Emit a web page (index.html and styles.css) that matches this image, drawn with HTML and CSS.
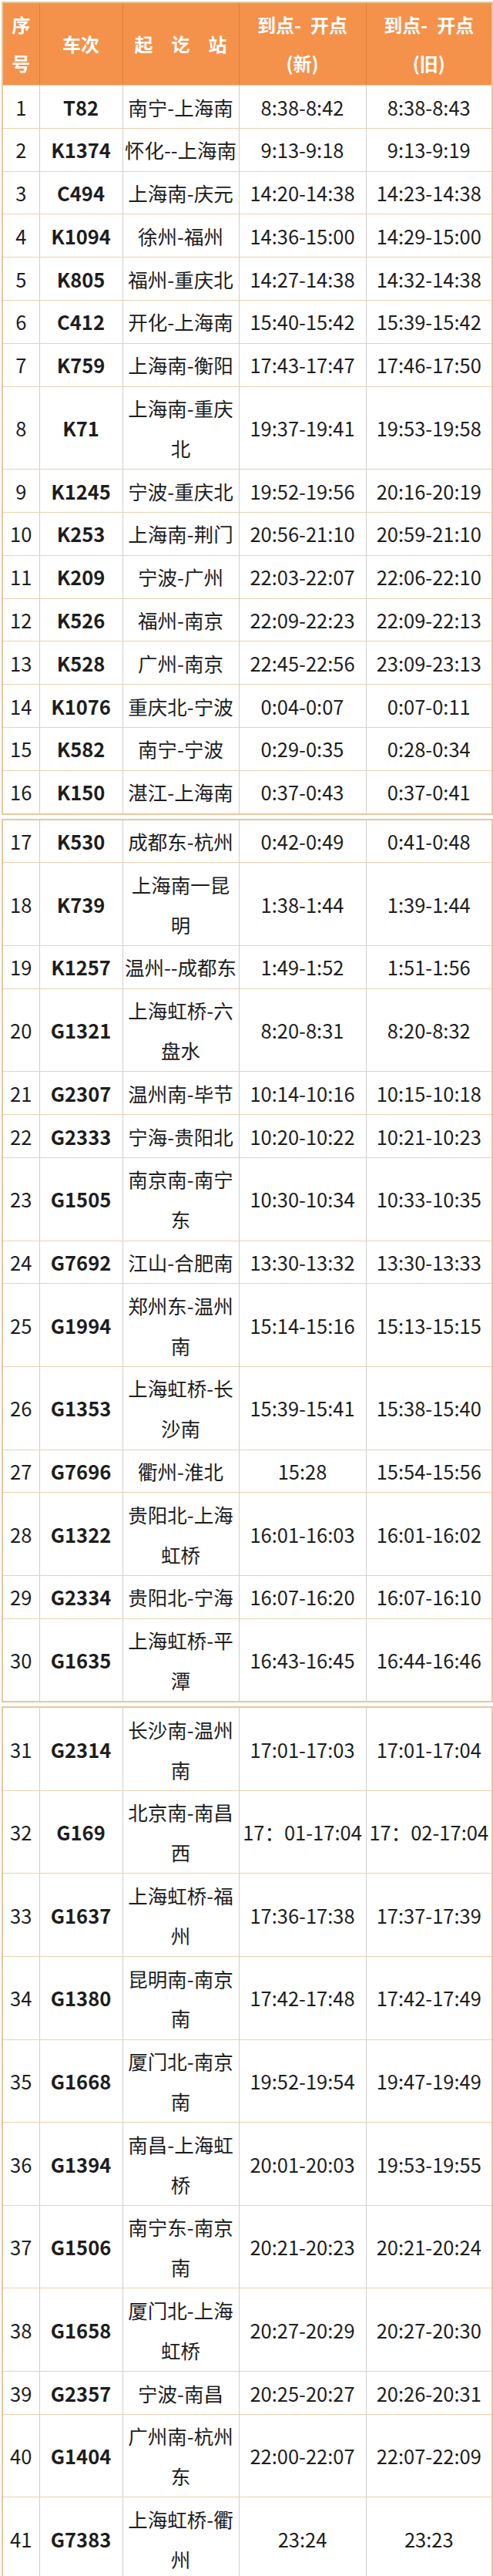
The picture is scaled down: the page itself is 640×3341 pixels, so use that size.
FILE: index.html
```html
<!DOCTYPE html>
<html lang="zh-CN">
<head>
<meta charset="utf-8">
<title>列车时刻调整表</title>
<link rel="stylesheet" href="styles.css">
</head>
<body>
<div class="page">
<table class="tt">
<colgroup><col class="c1"><col class="c2"><col class="c3"><col class="c4"><col class="c5"></colgroup>
<thead>
<tr><th>序<br>号</th><th>车次</th><th>起&emsp;讫&emsp;站</th><th>到点-&ensp;开点<br>(新)</th><th>到点-&ensp;开点<br>(旧)</th></tr>
</thead>
<tbody>
<tr><td>1</td><td class="no">T82</td><td class="st">南宁-上海南</td><td>8:38-8:42</td><td>8:38-8:43</td></tr>
<tr><td>2</td><td class="no">K1374</td><td class="st">怀化--上海南</td><td>9:13-9:18</td><td>9:13-9:19</td></tr>
<tr><td>3</td><td class="no">C494</td><td class="st">上海南-庆元</td><td>14:20-14:38</td><td>14:23-14:38</td></tr>
<tr><td>4</td><td class="no">K1094</td><td class="st">徐州-福州</td><td>14:36-15:00</td><td>14:29-15:00</td></tr>
<tr><td>5</td><td class="no">K805</td><td class="st">福州-重庆北</td><td>14:27-14:38</td><td>14:32-14:38</td></tr>
<tr><td>6</td><td class="no">C412</td><td class="st">开化-上海南</td><td>15:40-15:42</td><td>15:39-15:42</td></tr>
<tr><td>7</td><td class="no">K759</td><td class="st">上海南-衡阳</td><td>17:43-17:47</td><td>17:46-17:50</td></tr>
<tr><td>8</td><td class="no">K71</td><td class="st">上海南-重庆北</td><td>19:37-19:41</td><td>19:53-19:58</td></tr>
<tr><td>9</td><td class="no">K1245</td><td class="st">宁波-重庆北</td><td>19:52-19:56</td><td>20:16-20:19</td></tr>
<tr><td>10</td><td class="no">K253</td><td class="st">上海南-荆门</td><td>20:56-21:10</td><td>20:59-21:10</td></tr>
<tr><td>11</td><td class="no">K209</td><td class="st">宁波-广州</td><td>22:03-22:07</td><td>22:06-22:10</td></tr>
<tr><td>12</td><td class="no">K526</td><td class="st">福州-南京</td><td>22:09-22:23</td><td>22:09-22:13</td></tr>
<tr><td>13</td><td class="no">K528</td><td class="st">广州-南京</td><td>22:45-22:56</td><td>23:09-23:13</td></tr>
<tr><td>14</td><td class="no">K1076</td><td class="st">重庆北-宁波</td><td>0:04-0:07</td><td>0:07-0:11</td></tr>
<tr><td>15</td><td class="no">K582</td><td class="st">南宁-宁波</td><td>0:29-0:35</td><td>0:28-0:34</td></tr>
<tr><td>16</td><td class="no">K150</td><td class="st">湛江-上海南</td><td>0:37-0:43</td><td>0:37-0:41</td></tr>
</tbody>
</table>

<table class="tt">
<colgroup><col class="c1"><col class="c2"><col class="c3"><col class="c4"><col class="c5"></colgroup>
<tbody>
<tr><td>17</td><td class="no">K530</td><td class="st">成都东-杭州</td><td>0:42-0:49</td><td>0:41-0:48</td></tr>
<tr><td>18</td><td class="no">K739</td><td class="st">上海南一昆明</td><td>1:38-1:44</td><td>1:39-1:44</td></tr>
<tr><td>19</td><td class="no">K1257</td><td class="st">温州--成都东</td><td>1:49-1:52</td><td>1:51-1:56</td></tr>
<tr><td>20</td><td class="no">G1321</td><td class="st">上海虹桥-六盘水</td><td>8:20-8:31</td><td>8:20-8:32</td></tr>
<tr><td>21</td><td class="no">G2307</td><td class="st">温州南-毕节</td><td>10:14-10:16</td><td>10:15-10:18</td></tr>
<tr><td>22</td><td class="no">G2333</td><td class="st">宁海-贵阳北</td><td>10:20-10:22</td><td>10:21-10:23</td></tr>
<tr><td>23</td><td class="no">G1505</td><td class="st">南京南-南宁东</td><td>10:30-10:34</td><td>10:33-10:35</td></tr>
<tr><td>24</td><td class="no">G7692</td><td class="st">江山-合肥南</td><td>13:30-13:32</td><td>13:30-13:33</td></tr>
<tr><td>25</td><td class="no">G1994</td><td class="st">郑州东-温州南</td><td>15:14-15:16</td><td>15:13-15:15</td></tr>
<tr><td>26</td><td class="no">G1353</td><td class="st">上海虹桥-长沙南</td><td>15:39-15:41</td><td>15:38-15:40</td></tr>
<tr><td>27</td><td class="no">G7696</td><td class="st">衢州-淮北</td><td>15:28</td><td>15:54-15:56</td></tr>
<tr><td>28</td><td class="no">G1322</td><td class="st">贵阳北-上海虹桥</td><td>16:01-16:03</td><td>16:01-16:02</td></tr>
<tr><td>29</td><td class="no">G2334</td><td class="st">贵阳北-宁海</td><td>16:07-16:20</td><td>16:07-16:10</td></tr>
<tr><td>30</td><td class="no">G1635</td><td class="st">上海虹桥-平潭</td><td>16:43-16:45</td><td>16:44-16:46</td></tr>
</tbody>
</table>

<table class="tt">
<colgroup><col class="c1"><col class="c2"><col class="c3"><col class="c4"><col class="c5"></colgroup>
<tbody>
<tr><td>31</td><td class="no">G2314</td><td class="st">长沙南-温州南</td><td>17:01-17:03</td><td>17:01-17:04</td></tr>
<tr><td>32</td><td class="no">G169</td><td class="st">北京南-南昌西</td><td>17：01-17:04</td><td>17：02-17:04</td></tr>
<tr><td>33</td><td class="no">G1637</td><td class="st">上海虹桥-福州</td><td>17:36-17:38</td><td>17:37-17:39</td></tr>
<tr><td>34</td><td class="no">G1380</td><td class="st">昆明南-南京南</td><td>17:42-17:48</td><td>17:42-17:49</td></tr>
<tr><td>35</td><td class="no">G1668</td><td class="st">厦门北-南京南</td><td>19:52-19:54</td><td>19:47-19:49</td></tr>
<tr><td>36</td><td class="no">G1394</td><td class="st">南昌-上海虹桥</td><td>20:01-20:03</td><td>19:53-19:55</td></tr>
<tr><td>37</td><td class="no">G1506</td><td class="st">南宁东-南京南</td><td>20:21-20:23</td><td>20:21-20:24</td></tr>
<tr><td>38</td><td class="no">G1658</td><td class="st">厦门北-上海虹桥</td><td>20:27-20:29</td><td>20:27-20:30</td></tr>
<tr><td>39</td><td class="no">G2357</td><td class="st">宁波-南昌</td><td>20:25-20:27</td><td>20:26-20:31</td></tr>
<tr><td>40</td><td class="no">G1404</td><td class="st">广州南-杭州东</td><td>22:00-22:07</td><td>22:07-22:09</td></tr>
<tr><td>41</td><td class="no">G7383</td><td class="st">上海虹桥-衢州</td><td>23:24</td><td>23:23</td></tr>
</tbody>
</table>
</div>
</body>
</html>
```
FILE: styles.css
```css
html, body {
  margin: 0;
  padding: 0;
  background: #ffffff;
}

.page {
  width: 636px;
  padding: 2px 2px 0 2px;
  display: flex;
  flex-direction: column;
  gap: 5px;
}

.tt {
  width: 636px;
  table-layout: fixed;
  border-collapse: collapse;
  border: 2px solid #e6c79e;
  font-family: "Noto Sans CJK SC", "Noto Sans", sans-serif;
  color: #1d1d1d;
}

.c1 { width: 48px; }
.c2 { width: 108px; }
.c3 { width: 151px; }
.c4 { width: 165px; }
.c5 { width: 164px; }

.tt th {
  background: #f4924b;
  color: #ffffff;
  font-weight: 700;
  font-size: 24px;
  line-height: 50px;
  padding: 3px 0;
  text-align: center;
  vertical-align: middle;
  border-left: 1px solid #e07f3a;
  border-right: 1px solid #e07f3a;
  border-bottom: 1px solid #efd2b0;
  white-space: nowrap;
}

.tt td {
  font-size: 25.5px;
  line-height: 51.8px;
  padding: 1.5px 1px;
  text-align: center;
  vertical-align: middle;
  border-top: 1px solid #ead2b0;
  border-bottom: 1px solid #ead2b0;
  border-left: 1px solid #cfcfcf;
  border-right: 1px solid #cfcfcf;
  white-space: nowrap;
  overflow: visible;
}

.tt td.no {
  font-weight: 700;
}

.tt td.st {
  white-space: normal;
  padding: 1.5px 0;
}
```
